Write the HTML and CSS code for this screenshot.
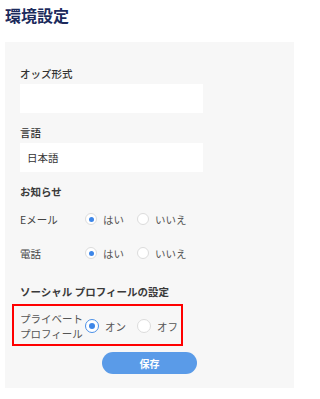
FILE: index.html
```html
<!DOCTYPE html>
<html lang="ja">
<head>
<meta charset="utf-8">
<title>環境設定</title>
<link rel="stylesheet" href="styles.css">
</head>
<body>
<h1 class="title">環境設定</h1>
<div class="panel">
  <div class="field">
    <div class="label">オッズ形式</div>
    <div class="input"></div>
  </div>
  <div class="field">
    <div class="label">言語</div>
    <div class="input">日本語</div>
  </div>
  <div class="heading">お知らせ</div>
  <div class="row row-first">
    <div class="row-label">Eメール</div>
    <span class="option"><span class="radio checked"></span>はい</span>
    <span class="option"><span class="radio"></span>いいえ</span>
  </div>
  <div class="row row-second">
    <div class="row-label">電話</div>
    <span class="option"><span class="radio checked"></span>はい</span>
    <span class="option"><span class="radio"></span>いいえ</span>
  </div>
  <div class="heading heading-social">ソーシャル プロフィールの設定</div>
  <div class="private-box">
    <div class="private-label">プライベートプロフィール</div>
    <span class="option option-lg"><span class="radio radio-lg active"></span>オン</span>
    <span class="option option-lg"><span class="radio radio-lg"></span>オフ</span>
  </div>
  <div class="actions">
    <button class="save" type="button">保存</button>
  </div>
</div>
</body>
</html>
```
FILE: styles.css
```css
html, body {
  margin: 0;
  padding: 0;
  background: #ffffff;
}
body {
  font-family: "Noto Sans CJK JP", "Noto Sans", sans-serif;
  font-size: 10.5px;
  color: #333333;
  width: 300px;
}
.title {
  margin: 5px 0 17px 5px;
  font-size: 16px;
  line-height: 20px;
  font-weight: 700;
  color: #1c2a5c;
}
.panel {
  margin: 0 6px 0 5px;
  background: #f7f7f7;
  padding: 24px 6px 14px 15px;
}
.field {
  margin-bottom: 12px;
}
.label {
  line-height: 15px;
  margin-bottom: 3px;
  font-weight: 500;
  color: #333333;
}
.input {
  width: 176px;
  height: 29px;
  background: #ffffff;
  padding-left: 7px;
  line-height: 29px;
  color: #333333;
}
.heading {
  line-height: 15px;
  font-weight: 700;
  color: #3a3a3a;
}
.heading-social {
  margin-top: 21px;
}
.row {
  display: flex;
  align-items: center;
  height: 20px;
}
.row-first {
  margin-top: 10px;
}
.row-second {
  margin-top: 14px;
}
.row-label {
  width: 65px;
  color: #444444;
}
.option {
  display: inline-flex;
  align-items: center;
  gap: 6px;
  margin-right: 13px;
  color: #555555;
}
.radio {
  box-sizing: border-box;
  width: 12px;
  height: 12px;
  border-radius: 50%;
  border: 1px solid #dcdcdc;
  background: #ffffff;
  display: inline-flex;
  align-items: center;
  justify-content: center;
}
.radio.checked::after {
  content: "";
  width: 5px;
  height: 5px;
  border-radius: 50%;
  background: #3d86e8;
}
.radio-lg {
  width: 14px;
  height: 14px;
}
.radio-lg.active {
  border: 1.5px solid #4a8fe7;
}
.radio-lg.active::after {
  content: "";
  width: 6px;
  height: 6px;
  border-radius: 50%;
  background: #3d86e8;
}
.option-lg {
  margin-right: 11px;
}
.option-lg:last-child {
  margin-right: 0;
}
.private-box {
  margin: 5px 0 0 -8px;
  display: flex;
  align-items: center;
  width: fit-content;
  border: 2px solid #ff0000;
  padding: 5px 3px 3px 6px;
}
.private-label {
  width: 65px;
  line-height: 15px;
  color: #555555;
}
.actions {
  display: flex;
  justify-content: center;
  margin-top: 6px;
  margin-left: -9px;
}
.save {
  width: 95px;
  height: 22px;
  border: none;
  border-radius: 11px;
  background: #5a9be8;
  color: #ffffff;
  font-family: "Noto Sans CJK JP", "Noto Sans", sans-serif;
  font-size: 10px;
  font-weight: 700;
  padding: 0;
}
```
